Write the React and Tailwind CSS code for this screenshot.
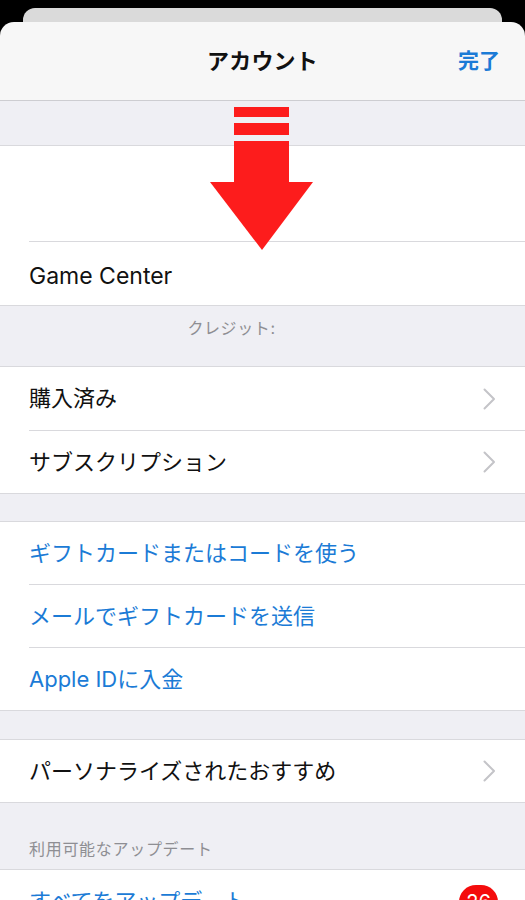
import React from "react";

// Account sheet (App Store) with a red marker arrow over the top rows.
const FONT = { fontFamily: 'Inter, "Noto Sans CJK JP", sans-serif' };

function Chevron() {
  return (
    <svg width="13" height="22" viewBox="0 0 13 22" className="shrink-0">
      <polyline points="1.5,1.5 11,11 1.5,20.5" fill="none" stroke="#c4c4c8" strokeWidth="2" strokeLinecap="round" strokeLinejoin="round" />
    </svg>
  );
}

function Row({ children, h = "h-[63px]", line = true, blue = false, chevron = false, right = null, text = "text-[22px]", pad = "" }) {
  return (
    <div className="pl-[29px]">
      <div className={`${h} ${pad} flex items-center justify-between pr-[29px] ${line ? "border-b border-[#d9d9dd]" : ""}`}>
        <span className={`${text} ${blue ? "text-[#1b7bd6]" : "text-[#111]"}`}>{children}</span>
        {chevron && <Chevron />}
        {right}
      </div>
    </div>
  );
}

function Group({ children }) {
  return <div className="bg-white border-y border-[#d9d9dd]">{children}</div>;
}

export default function App() {
  return (
    <div className="h-[900px] overflow-hidden bg-black relative" style={FONT}>
      <div className="pt-[8px]">
        <div className="h-[14px] mx-[23px] rounded-t-[12px] bg-[#dadada]" />
      </div>
      <div className="rounded-t-[14px] bg-[#f7f7f7] overflow-hidden">
        {/* Nav bar */}
        <div className="h-[79px] border-b border-[#cdcdd1] flex items-center justify-center relative">
          <span className="text-[22px] font-bold text-[#111] tracking-[0.2px]">アカウント</span>
          <span className="absolute right-[25px] text-[21px] font-bold text-[#1b7bd6]">完了</span>
        </div>

        <div className="bg-[#efeff4]">
          <div className="h-[44px]" />
          <Group>
            <Row h="h-[96px]">{""}</Row>
            <Row line={false} text="text-[23px]" pad="pt-[6px]">Game Center</Row>
          </Group>

          <div className="h-[60px] flex items-start justify-center gap-[8px] pt-[10px]">
            <span className="text-[16px] text-[#8e8e93] tracking-[0.6px]">クレジット:</span>
            <span className="w-[54px]" />
          </div>

          <Group>
            <Row h="h-[64px]" chevron>購入済み</Row>
            <Row h="h-[62px]" line={false} chevron>サブスクリプション</Row>
          </Group>

          <div className="h-[27px]" />

          <Group>
            <Row blue>ギフトカードまたはコードを使う</Row>
            <Row blue>メールでギフトカードを送信</Row>
            <Row h="h-[62px]" line={false} blue>Apple IDに入金</Row>
          </Group>

          <div className="h-[28px]" />

          <Group>
            <Row h="h-[62px]" line={false} chevron>パーソナライズされたおすすめ</Row>
          </Group>

          <div className="h-[66px] flex items-end pl-[29px] pb-[8px]">
            <span className="text-[16px] text-[#8e8e93] tracking-[0.7px]">利用可能なアップデート</span>
          </div>

          <Group>
            <Row
              line={false}
              blue
              right={
                <span className="mr-[-2px] w-[39px] h-[34px] rounded-full bg-[#f40c0c] text-white text-[20px] flex items-center justify-center">26</span>
              }
            >
              すべてをアップデート
            </Row>
          </Group>
        </div>
      </div>

      {/* red marker arrow */}
      <svg className="absolute left-[210px] top-[107px]" width="104" height="144" viewBox="0 0 104 144">
        <rect x="24" y="0" width="55" height="10" fill="#fd1c1c" />
        <rect x="24" y="16" width="55" height="12" fill="#fd1c1c" />
        <rect x="24" y="34" width="55" height="42" fill="#fd1c1c" />
        <polygon points="0,75 103,75 52,143" fill="#fd1c1c" />
      </svg>
    </div>
  );
}
